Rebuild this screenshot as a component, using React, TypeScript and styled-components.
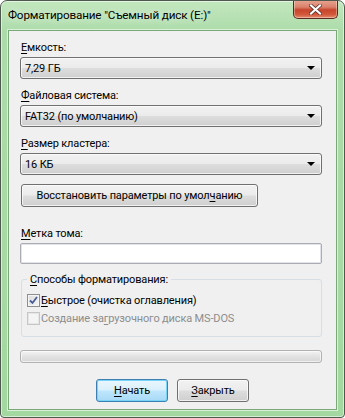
import React from "react";
import styled, { createGlobalStyle } from "styled-components";

const Global = createGlobalStyle`
  html, body { margin: 0; padding: 0; background: #ffffff; }
  body { font-family: Roboto, "Noto Sans", sans-serif; font-size: 11px; letter-spacing: -0.15px; color: #000; }
  * { box-sizing: border-box; }
`;

const Frame = styled.div`
  width: 345px;
  height: 418px;
  border: 1px solid #4d5a4d;
  border-radius: 7px 7px 4px 4px;
  background: linear-gradient(180deg, #c2e7be 0%, #addcaa 30px, #a3d8a0 100%);
  display: flex;
  flex-direction: column;
  overflow: hidden;
  box-shadow: inset 0 0 0 1px rgba(255,255,255,0.55);
`;

const TitleBar = styled.div`
  height: 29px;
  display: flex;
  align-items: flex-start;
  justify-content: space-between;
  padding-left: 7px;
`;

const Title = styled.div`
  margin-top: 7px;
  font-size: 11.7px;
  color: #000;
  text-shadow: 0 0 8px rgba(255,255,255,0.9);
`;

const CloseBtn = styled.div`
  width: 45px;
  height: 19px;
  margin-right: 6px;
  margin-top: -1px;
  border: 1px solid #5a2a22;
  border-top: none;
  border-radius: 0 0 5px 5px;
  background: linear-gradient(180deg, #e8a793 0%, #d9806a 40%, #c7452c 55%, #d2573b 80%, #e58c6c 100%);
  box-shadow: inset 0 0 0 1px rgba(255,255,255,0.35);
  display: flex;
  align-items: center;
  justify-content: center;
`;

const Client = styled.div`
  flex: 1;
  margin: 0 7px 7px 7px;
  border: 1px solid #7aa879;
  box-shadow: 0 0 0 1px #d8f0d6;
  background: #f0f0f0;
  padding: 8px 14px 0 11px;
  display: flex;
  flex-direction: column;
`;

const Label = styled.div<{ $top?: number }>`
  margin-top: ${(p) => p.$top ?? 0}px;
  height: 17px;
  line-height: 17px;
  padding-left: 1px;
`;

const U = styled.span`
  text-decoration: underline;
  text-underline-offset: 2px;
`;

const Select = styled.div`
  margin-top: 1px;
  height: 22px;
  flex: none;
  border: 1px solid #707070;
  border-radius: 3px;
  background: linear-gradient(180deg, #f2f2f2 0%, #ebebeb 48%, #dddddd 52%, #cfcfcf 100%);
  box-shadow: inset 0 0 0 1px rgba(255,255,255,0.7);
  display: flex;
  align-items: center;
  justify-content: space-between;
  padding: 0 6px 0 4px;
`;

const Arrow = styled.div`
  width: 0;
  height: 0;
  border-left: 4px solid transparent;
  border-right: 4px solid transparent;
  border-top: 4px solid #000;
`;

const Button = styled.div<{ $w: number; $default?: boolean }>`
  width: ${(p) => p.$w}px;
  height: 23px;
  flex: none;
  border: 1px solid ${(p) => (p.$default ? "#3c7fb1" : "#707070")};
  border-radius: 3px;
  background: ${(p) =>
    p.$default
      ? "linear-gradient(180deg, #eaf6fd 0%, #d9f0fc 48%, #bee6fd 52%, #a7d9f5 100%)"
      : "linear-gradient(180deg, #f2f2f2 0%, #ebebeb 48%, #dddddd 52%, #cfcfcf 100%)"};
  box-shadow: inset 0 0 0 1px ${(p) => (p.$default ? "#78d4f7" : "rgba(255,255,255,0.7)")};
  display: flex;
  align-items: center;
  justify-content: center;
  white-space: nowrap;
`;

const RestoreRow = styled.div`
  margin-top: 9px;
  padding-left: 1px;
`;

const Input = styled.div`
  margin-top: 1px;
  height: 21px;
  flex: none;
  background: #fff;
  border: 1px solid #abadb3;
  border-radius: 2px;
  box-shadow: inset 0 0 0 1px #e2e3ea;
`;

const Group = styled.div`
  position: relative;
  margin-top: 15px;
  margin-left: 1px;
  height: 58px;
  flex: none;
  border: 1px solid #d5dfe5;
  border-radius: 3px;
  padding: 12px 0 0 5px;
  display: flex;
  flex-direction: column;
  gap: 1px;
`;

const Legend = styled.div`
  position: absolute;
  top: -9px;
  left: 5px;
  padding: 0 3px;
  background: #f0f0f0;
  line-height: 17px;
`;

const CheckRow = styled.div<{ $disabled?: boolean }>`
  display: flex;
  align-items: center;
  gap: 1px;
  height: 17px;
  color: ${(p) => (p.$disabled ? "#8d8d8d" : "#000")};
`;

const Box = styled.div<{ $disabled?: boolean }>`
  width: 13px;
  height: 13px;
  border: 1px solid ${(p) => (p.$disabled ? "#c6c6c6" : "#8e8f8f")};
  background: ${(p) =>
    p.$disabled ? "#f4f4f4" : "linear-gradient(135deg, #dcdcdc 0%, #f6f6f6 100%)"};
  display: flex;
  align-items: center;
  justify-content: center;
  box-shadow: inset 0 0 0 1px ${(p) => (p.$disabled ? "#e6e6e6" : "#f4f4f4")};
`;

const Progress = styled.div`
  margin-top: 13px;
  height: 13px;
  flex: none;
  border: 1px solid #b2b2b2;
  border-radius: 3px;
  background: linear-gradient(180deg, #f3f3f3 0%, #e2e2e2 50%, #d6d6d6 100%);
  box-shadow: inset 0 0 0 1px rgba(255,255,255,0.6);
`;

const Footer = styled.div`
  margin-top: 16px;
  display: flex;
  justify-content: center;
  gap: 9px;
  padding-left: 3px;
`;

export default function App() {
  return (
    <>
      <Global />
      <Frame>
        <TitleBar>
          <Title>Форматирование "Съемный диск (E:)"</Title>
          <CloseBtn>
            <svg width="13" height="11" viewBox="0 0 13 11">
              <path d="M2 1.5 L11 9.5 M11 1.5 L2 9.5" stroke="#5a2a22" strokeWidth="3.6" strokeLinecap="square" />
              <path d="M2 1.5 L11 9.5 M11 1.5 L2 9.5" stroke="#ffffff" strokeWidth="2.2" strokeLinecap="square" />
            </svg>
          </CloseBtn>
        </TitleBar>
        <Client>
          <Label><U>Е</U>мкость:</Label>
          <Select>
            <span>7,29 ГБ</span>
            <Arrow />
          </Select>
          <Label $top={8}><U>Ф</U>айловая система:</Label>
          <Select>
            <span>FAT32 (по умолчанию)</span>
            <Arrow />
          </Select>
          <Label $top={8}><U>Р</U>азмер кластера:</Label>
          <Select>
            <span>16 КБ</span>
            <Arrow />
          </Select>
          <RestoreRow>
            <Button $w={237}>
              <span>Восстановить параметры по умол<U>ч</U>анию</span>
            </Button>
          </RestoreRow>
          <Label $top={18}><U>М</U>етка тома:</Label>
          <Input />
          <Group>
            <Legend><U>С</U>пособы форматирования:</Legend>
            <CheckRow>
              <Box>
                <svg width="9" height="9" viewBox="0 0 9 9">
                  <path d="M1 4.5 L3.5 7 L8 1" fill="none" stroke="#4a5f97" strokeWidth="1.8" />
                </svg>
              </Box>
              <span><U>Б</U>ыстрое (очистка оглавления)</span>
            </CheckRow>
            <CheckRow $disabled>
              <Box $disabled />
              <span>Создание за<U>г</U>рузочного диска MS-DOS</span>
            </CheckRow>
          </Group>
          <Progress />
          <Footer>
            <Button $w={72} $default>
              <span><U>Н</U>ачать</span>
            </Button>
            <Button $w={72}>
              <span><U>З</U>акрыть</span>
            </Button>
          </Footer>
        </Client>
      </Frame>
    </>
  );
}
